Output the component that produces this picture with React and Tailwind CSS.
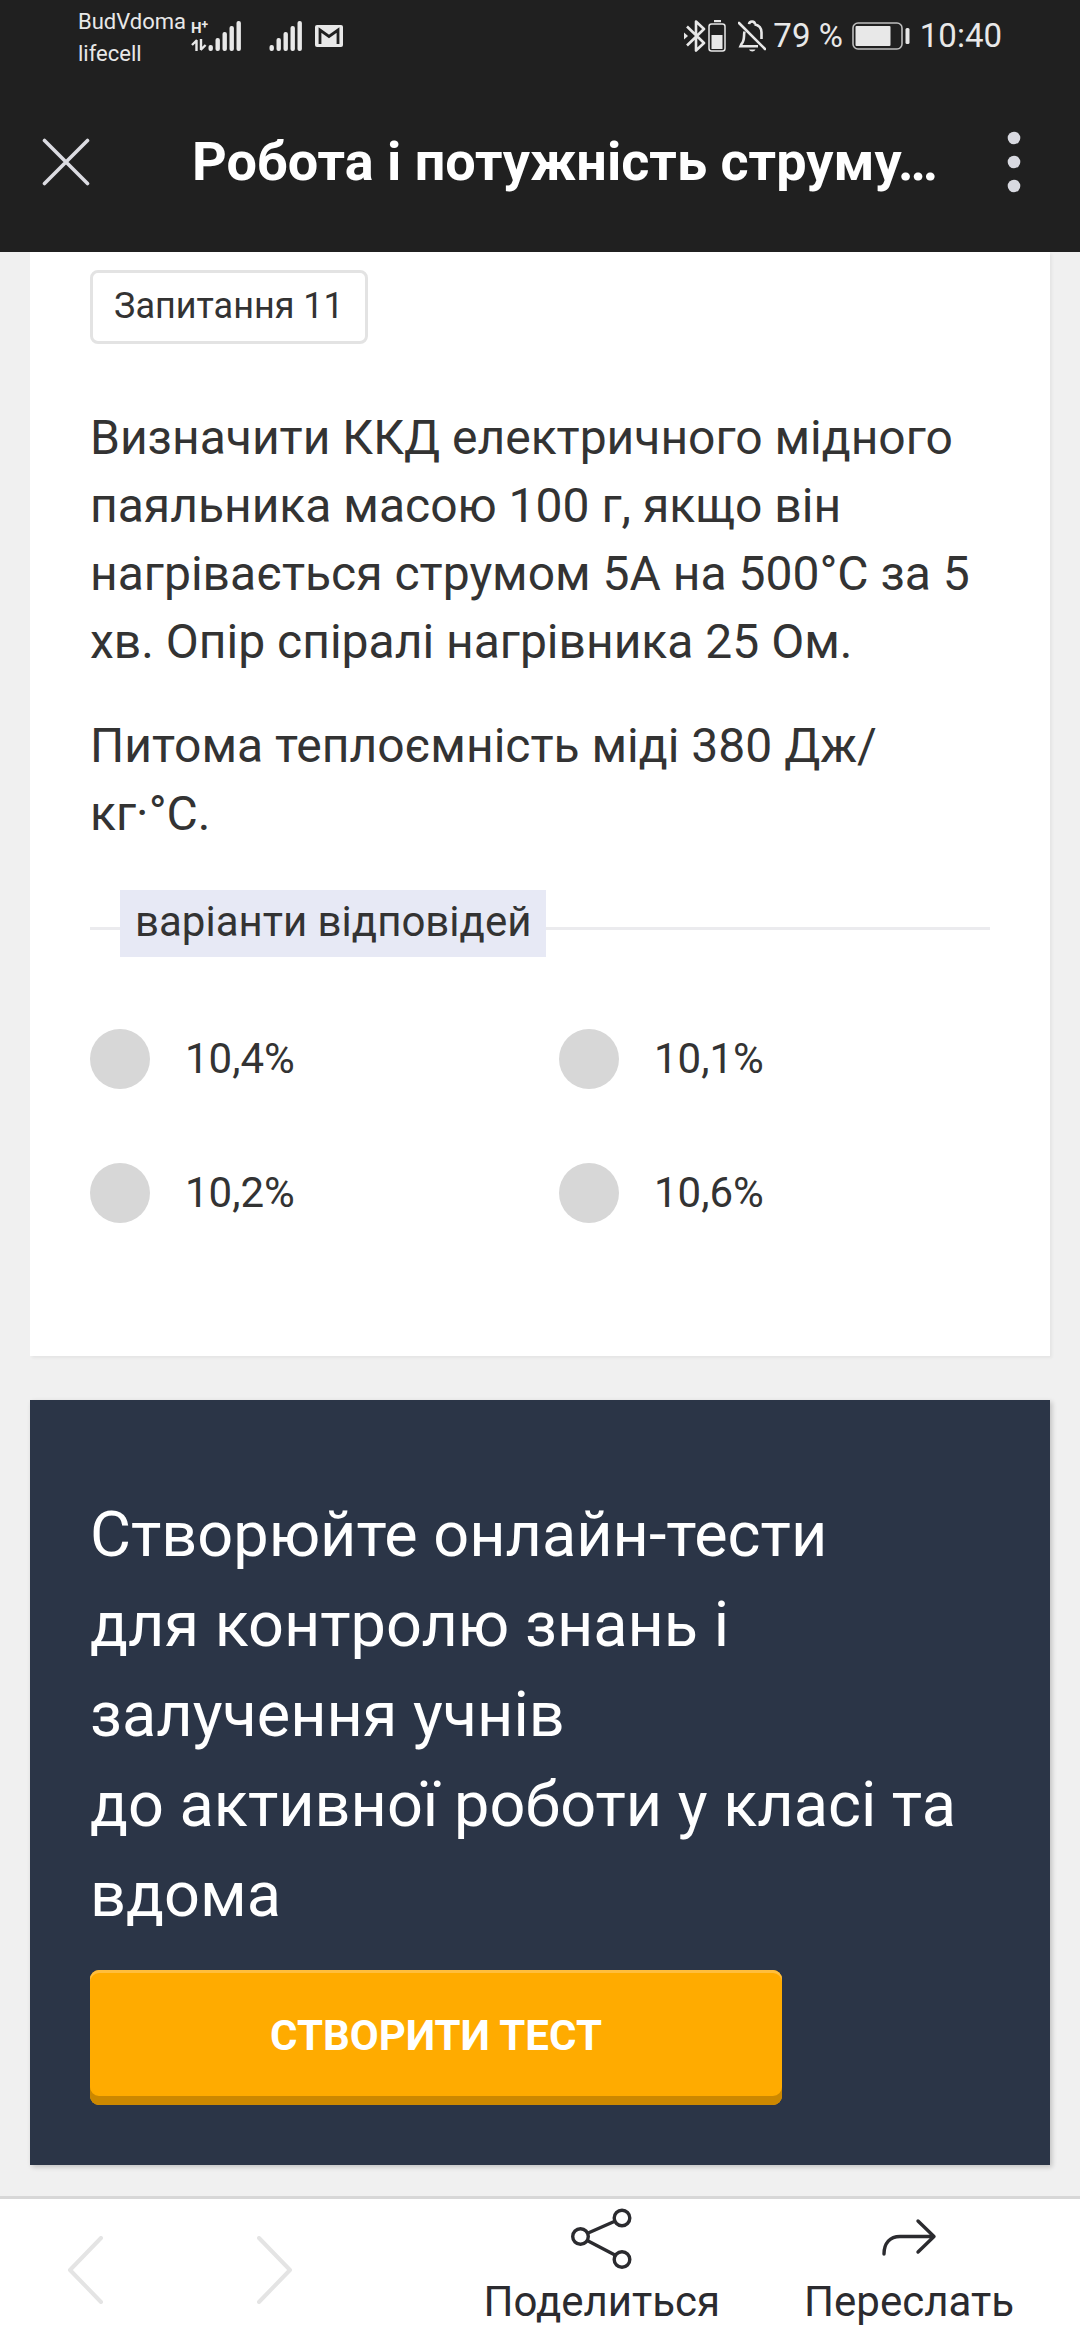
import React, { useState } from "react";

const BARS = [
  { x: 0, h: 6 },
  { x: 7, h: 13 },
  { x: 14, h: 19 },
  { x: 21, h: 25 },
  { x: 28, h: 30 },
];

function Signal() {
  return (
    <svg width="34" height="30" viewBox="0 0 34 30" fill="#e8e8e8" aria-hidden="true">
      {BARS.map((b) => (
        <rect key={b.x} x={b.x + 0.5} y={30 - b.h} width="4.4" height={b.h} rx="2" />
      ))}
    </svg>
  );
}

function StatusBar() {
  return (
    <div className="flex h-[72px] items-center justify-between pl-[78px] pr-[78px] text-[#e8e8e8]">
      <div className="flex items-center">
        <div className="w-[113px] pt-[3px] text-[22px] leading-8 whitespace-nowrap">
          <div>BudVdoma</div>
          <div>lifecell</div>
        </div>
        <div className="flex w-[17px] flex-col gap-[3px]">
          <span className="flex items-start text-[15px] leading-[15px] font-bold">
            H<span className="text-[12px] leading-[9px]">+</span>
          </span>
          <svg width="16" height="12" viewBox="0 0 16 12" fill="none" stroke="#e8e8e8" strokeWidth="2.4" aria-hidden="true">
            <path d="M5.5 12V1M6 1 1 6M10 0v11M9.600 11l5-5" />
          </svg>
        </div>
        <Signal />
        <div className="w-[27px]" />
        <Signal />
        <svg className="ml-3" width="28" height="22" viewBox="0 0 28 22" aria-hidden="true">
          <rect width="28" height="22" rx="2" fill="#e8e8e8" />
          <path d="M5 19V5l9 6.500L23 5v14" fill="none" stroke="#202020" strokeWidth="2.800" />
        </svg>
      </div>
      <div className="flex items-center text-[33px] leading-10">
        <svg width="22" height="32" viewBox="0 0 22 32" fill="none" stroke="#e8e8e8" strokeWidth="2.600" aria-hidden="true">
          <path d="M3 6.500 20 23l-8 7.500V1.500L20 9 3 25.500" strokeLinejoin="round" />
          <path d="M0 12.500 4 16l-4 3.500z" fill="#e8e8e8" stroke="none" />
        </svg>
        <svg className="ml-[2px]" width="18" height="32" viewBox="0 0 18 32" aria-hidden="true">
          <rect x="6" y="0" width="7" height="2.200" fill="#e8e8e8" />
          <rect x="1" y="4" width="16" height="27" rx="2.500" fill="none" stroke="#e8e8e8" strokeWidth="1.500" />
          <rect x="3.500" y="15" width="11" height="14" fill="#e8e8e8" />
        </svg>
        <svg className="ml-3" width="28" height="32" viewBox="0 0 28 32" fill="none" stroke="#e8e8e8" strokeWidth="2.600" aria-hidden="true">
          <path d="M1 3l26 26" strokeLinecap="round" />
          <path d="M23.500 19v-6.500c0-4.500-3-7.500-7-8.300M11 4.200c.4-3.600 5.700-3.600 6 0M6.500 11.500c-1 4 .5 9-3 12.500L2.500 26.300H20" />
          <path d="M11 29.500h6.500c-1 2.600-5.500 2.600-6.500 0z" fill="#e8e8e8" stroke="none" />
        </svg>
        <span className="ml-[7px]">79 %</span>
        <svg className="ml-[9px]" width="60" height="28" viewBox="0 0 60 28" aria-hidden="true">
          <rect x="1" y="1" width="49" height="26" rx="5" fill="none" stroke="#bdbdbd" strokeWidth="1.600" />
          <rect x="3.500" y="4" width="35" height="20" rx="1" fill="#e8e8e8" />
          <rect x="53.500" y="6" width="4" height="16" rx="1.500" fill="#e8e8e8" />
        </svg>
        <span className="ml-[8px]">10:40</span>
      </div>
    </div>
  );
}

function TitleBar() {
  return (
    <div className="flex h-[180px] items-start pt-[48px] pr-[36px] pl-[36px]">
      <button type="button" aria-label="Закрити" className="flex h-[84px] w-[60px] items-center justify-center">
        <svg width="48" height="48" viewBox="0 0 48 48" stroke="#dcdce2" strokeWidth="3.600" strokeLinecap="round">
          <path d="M2.500 2.500l43 43M45.500 2.500l-43 43" />
        </svg>
      </button>
      <h1 className="ml-24 flex-1 truncate text-[54px] leading-[84px] font-bold text-white">
        Робота і потужність струму…
      </h1>
      <button type="button" aria-label="Меню" className="flex h-[84px] w-[60px] items-center justify-center">
        <svg width="14" height="62" viewBox="0 0 14 62" fill="#d8d9e0">
          <circle cx="7" cy="7" r="6.300" />
          <circle cx="7" cy="31" r="6.300" />
          <circle cx="7" cy="55" r="6.300" />
        </svg>
      </button>
    </div>
  );
}

const ANSWERS = ["10,4%", "10,1%", "10,2%", "10,6%"];

function Question() {
  const [picked, setPicked] = useState(null);
  return (
    <section className="bg-white px-[60px] pt-[18px] pb-[133px] shadow-[2px_2px_3px_rgba(0,0,0,0.05)]">
      <div className="flex h-[74px] w-fit items-center rounded-[8px] border-3 border-[#e3e3e3] px-[21px] pb-[2px] text-[36px] leading-[48px]">
        Запитання 11
      </div>
      <div className="mt-[60px] text-[48px] leading-[68px]">
        <p>Визначити ККД електричного мідного паяльника масою 100 г, якщо він нагрівається струмом 5А на 500°С за 5 хв. Опір спіралі нагрівника 25 Ом.</p>
        <p className="mt-9">
          Питома теплоємність міді 380 Дж/
          <wbr />
          кг·°С.
        </p>
      </div>
      <div className="mt-[42px] flex items-center">
        <div className="mt-[10px] h-[3px] w-[30px] bg-[#ebebee]" />
        <h2 id="answers" className="h-[67px] bg-[#e7e9f5] px-[15px] text-[42px] leading-[64px]">
          варіанти відповідей
        </h2>
        <div className="mt-[10px] h-[3px] flex-1 bg-[#ebebee]" />
      </div>
      <div role="radiogroup" aria-labelledby="answers" className="mt-[72px] grid grid-cols-2 gap-x-[38px] gap-y-[74px]">
        {ANSWERS.map((a) => (
          <label key={a} className="flex h-[60px] items-center gap-[35px] text-[42px] leading-[60px]">
            <input
              type="radio"
              name="answer"
              value={a}
              checked={picked === a}
              onChange={() => setPicked(a)}
              className="size-[60px] appearance-none rounded-full bg-[#d7d7d7] checked:bg-[#ffab00]"
            />
            {a}
          </label>
        ))}
      </div>
    </section>
  );
}

function Promo() {
  return (
    <section className="mt-[44px] bg-[#2b3547] px-[60px] pt-[90px] pb-[60px] text-white shadow-[2px_2px_5px_rgba(0,0,0,0.2)]">
      <p className="text-[63px] leading-[90px]">
        Створюйте онлайн-тести
        <br />
        для контролю знань і залучення учнів
        <br />
        до активної роботи у класі та вдома
      </p>
      <button
        type="button"
        className="mt-[30px] block h-[135px] w-[692px] max-w-full rounded-[9px] bg-[#ffab00] pb-[3px] text-[42px] leading-[60px] font-bold shadow-[inset_0_-9px_0_#cc8800,inset_0_3px_0_#ffbe3d]"
      >
        СТВОРИТИ ТЕСТ
      </button>
    </section>
  );
}

function BottomBar() {
  return (
    <footer className="mt-[30px] flex h-[144px] items-start border-t-3 border-[#d7d7d7] bg-white pr-[66px] pl-[67px] text-[#2b2b2f]">
      <button type="button" aria-label="Назад" className="mt-[37px]">
        <svg width="36" height="68" viewBox="0 0 36 68" fill="none" stroke="#e4e4e4" strokeWidth="4" strokeLinecap="round" strokeLinejoin="round">
          <path d="M34 2 3 34l31 32" />
        </svg>
      </button>
      <button type="button" aria-label="Вперед" className="mt-[37px] ml-[154px]">
        <svg width="36" height="68" viewBox="0 0 36 68" fill="none" stroke="#e4e4e4" strokeWidth="4" strokeLinecap="round" strokeLinejoin="round">
          <path d="M2 2l31 32L2 66" />
        </svg>
      </button>
      <div className="flex flex-1 justify-end gap-[84px] text-[42px] leading-[50px]">
        <button type="button" className="flex flex-col items-center pt-[8px]">
          <svg width="62" height="62" viewBox="0 0 62 62" fill="none" stroke="#2b2b2f" strokeWidth="3.400">
            <circle cx="9.500" cy="29.500" r="7.800" />
            <circle cx="51" cy="11" r="7.800" />
            <circle cx="51" cy="52.500" r="7.800" />
            <path d="M16.600 26.300 43.800 14.300M16.200 33.500l28.200 14.800" />
          </svg>
          <span className="mt-[8px]">Поделиться</span>
        </button>
        <button type="button" className="flex flex-col items-center pt-[8px]">
          <svg width="62" height="62" viewBox="0 0 62 62" fill="none" stroke="#2b2b2f" strokeWidth="3.400" strokeLinecap="round" strokeLinejoin="round">
            <path d="M6 47C6 36 12 29.500 22 29.500H56M40 14l16 15.500L40 45" />
          </svg>
          <span className="mt-[8px]">Переслать</span>
        </button>
      </div>
    </footer>
  );
}

export default function App() {
  return (
    <div className="flex min-h-screen flex-col bg-[#f0f0f0] font-[Roboto,sans-serif] text-[#333333]">
      <header className="bg-[#202020]">
        <StatusBar />
        <TitleBar />
      </header>
      <main className="flex-1 px-[30px]">
        <Question />
        <Promo />
      </main>
      <BottomBar />
    </div>
  );
}
